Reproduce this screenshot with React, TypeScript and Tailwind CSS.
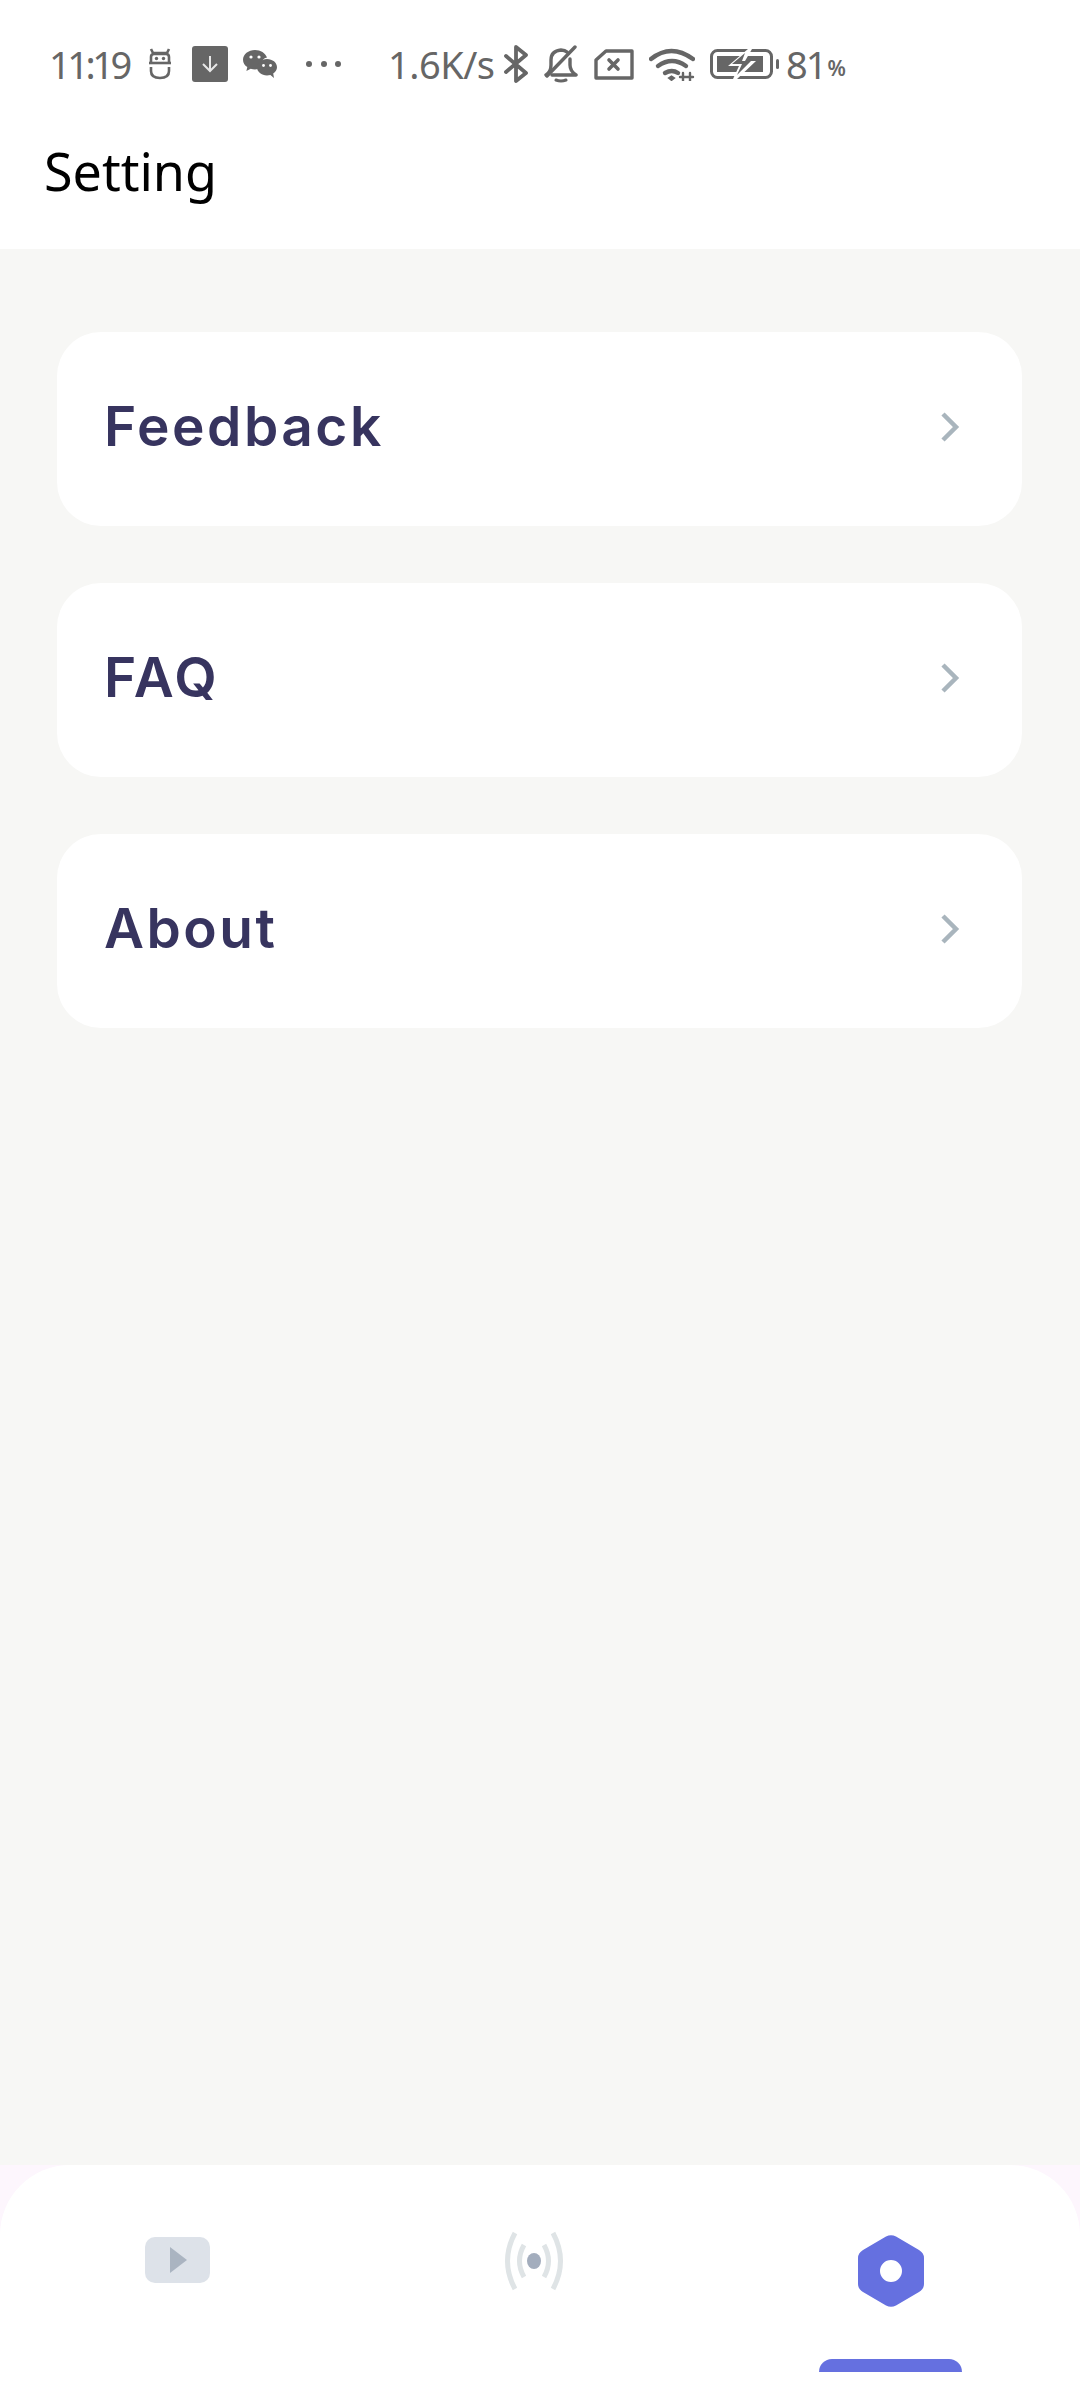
function RobotIcon() {
  return (
    <svg width="24" height="32" viewBox="0 0 24 32" fill="none" stroke="#666" strokeWidth="2.6" className="ml-[17px]">
      <path d="M3 1l2 4h14l2-4" />
      <path d="M3 14V9q0-3 3-3h12q3 0 3 3v5" />
      <path d="M1 15h22" />
      <path d="M3 19v4q0 7 9 7t9-7v-4" />
      <circle cx="8.500" cy="10.500" r="1.700" fill="#666" stroke="none" />
      <circle cx="15.500" cy="10.500" r="1.700" fill="#666" stroke="none" />
    </svg>
  )
}

function DownloadIcon() {
  return (
    <div className="ml-[20px] flex h-[36px] w-[36px] items-center justify-center rounded-[3px] bg-[#666]">
      <svg width="18" height="20" viewBox="0 0 18 20" fill="none" stroke="#e8e8e8" strokeWidth="2">
        <path d="M9 2v15M2 10l7 7 7-7" />
      </svg>
    </div>
  )
}

function WechatIcon() {
  return (
    <svg width="34" height="29" viewBox="0 0 34 29" className="ml-[15px]">
      <path d="M12 0C5.400 0 0 4.300 0 9.700c0 3 1.700 5.600 4.300 7.400L3.400 21l4.300-2.300c1.400.4 2.800.7 4.300.7 1 0 1.900-.1 2.800-.3C18 10 22 7.500 24 7.500 22.400 3 17.600 0 12 0z" fill="#666" />
      <circle cx="8" cy="7" r="1.600" fill="#fff" />
      <circle cx="16" cy="7" r="1.600" fill="#fff" />
      <path d="M24 9c-5.500 0-10 3.600-10 8.200s4.500 8.200 10 8.200c1.200 0 2.300-.2 3.400-.5L31 28l-.8-4.600c2.300-1.500 3.800-3.700 3.800-6.200C34 12.600 29.500 9 24 9z" fill="#666" />
      <circle cx="20.500" cy="15.500" r="1.400" fill="#fff" />
      <circle cx="27.500" cy="15.500" r="1.400" fill="#fff" />
    </svg>
  )
}

function BluetoothIcon() {
  return (
    <svg width="25" height="38" viewBox="0 0 25 38" fill="none" stroke="#666" strokeWidth="3.800" strokeLinecap="round" strokeLinejoin="round" className="ml-[10px]">
      <path d="M2 11l20 17-10 8V2l10 8L2 27" />
    </svg>
  )
}

function BellOffIcon() {
  return (
    <svg width="34" height="38" viewBox="0 0 34 38" fill="none" stroke="#666" strokeWidth="3.400" strokeLinecap="round" strokeLinejoin="round" className="ml-[15px]">
      <path d="M2 30q5-3 5-10v-5q0-9 10-10 4 0 6 2" />
      <path d="M26 14v6q0 6 6 10H8" />
      <path d="M31 2L3 31" />
      <path d="M12 35q5 2 10 0" strokeWidth="3" />
    </svg>
  )
}

function SimIcon() {
  return (
    <svg width="40" height="31" viewBox="0 0 40 31" fill="none" stroke="#666" strokeWidth="3.400" strokeLinejoin="round" className="ml-[16px]">
      <path d="M12 2h26v27H2V11z" />
      <path d="M15 11l9 9M24 11l-9 9" strokeLinecap="round" strokeWidth="3.600" />
    </svg>
  )
}

function WifiIcon() {
  return (
    <svg width="46" height="33" viewBox="0 0 46 33" fill="none" stroke="#666" strokeWidth="4.400" strokeLinecap="round" className="ml-[15px]">
      <path d="M2 11q20-16 42 0" />
      <path d="M9 18q14-10 28 0" />
      <path d="M16 25q7-4 13 0" />
      <path d="M20 30l2.500 2 2.500-2-2.500-1.500z" fill="#666" strokeWidth="2" />
      <path d="M34 25v8M41 25v8M31 29h6M38 29h6" strokeWidth="2.400" />
    </svg>
  )
}

function BatteryIcon() {
  return (
    <svg width="69" height="30" viewBox="0 0 69 30" fill="none" className="ml-[15px]">
      <rect x="1.500" y="1.500" width="60" height="27" rx="6" stroke="#666" strokeWidth="3" />
      <rect x="7" y="7" width="46" height="16" fill="#666" />
      <rect x="66" y="10" width="3" height="10" rx="1.500" fill="#666" />
      <path d="M38 0L18 17h11l-6 13 4 0 19-18H35l7-12z" fill="#fff" />
      <path d="M35 4L22 15h10l-5 11 14-14H32z" fill="#666" />
    </svg>
  )
}

function StatusBar() {
  return (
    <div className="flex h-[128px] items-center pl-[49px] font-['Noto_Sans',sans-serif] text-[38px] leading-none text-[#666]">
      <span className="w-[82px] whitespace-nowrap tracking-[-3.500px]">11:19</span>
      <RobotIcon />
      <DownloadIcon />
      <WechatIcon />
      <div className="ml-[29px] flex w-[35px] justify-between">
        <span className="h-[6px] w-[6px] rounded-full bg-[#666]" />
        <span className="h-[6px] w-[6px] rounded-full bg-[#666]" />
        <span className="h-[6px] w-[6px] rounded-full bg-[#666]" />
      </div>
      <span className="ml-[47px] w-[106px] whitespace-nowrap tracking-[-0.500px]">1.6K/s</span>
      <BluetoothIcon />
      <BellOffIcon />
      <SimIcon />
      <WifiIcon />
      <BatteryIcon />
      <span className="ml-[7px] tracking-[-2px]">81</span>
      <span className="mt-[8px] ml-[2px] text-[21px] font-semibold tracking-[-1.500px]">%</span>
    </div>
  )
}

function MenuRow({ label }: { label: string }) {
  return (
    <div className="flex h-[194px] items-center justify-between rounded-[44px] bg-white pl-[47px] pr-[62px]">
      <span className="mb-[5px] font-['Inter',sans-serif] text-[55px] font-semibold tracking-[2.500px] text-[#37345f]">{label}</span>
      <svg width="20" height="32" viewBox="0 0 20 32" fill="none" stroke="#a9b5bd" strokeWidth="4.500" className="mb-[5px]">
        <path d="M3 3l13 13L3 29" />
      </svg>
    </div>
  )
}

function BottomNav() {
  return (
    <div className="bg-[#fdf6fd]">
      <div className="flex h-[235px] items-start rounded-t-[70px] bg-white pl-[145px]">
        <div className="mt-[72px] flex h-[46px] w-[65px] items-center justify-center rounded-[10px] bg-[#dde2e9]">
          <svg width="17" height="26" viewBox="0 0 17 26" className="ml-[1px]">
            <path d="M0 0l17 13L0 26z" fill="#aab4c1" />
          </svg>
        </div>
        <svg width="62" height="60" viewBox="0 0 62 60" fill="none" stroke="#dfe4e6" strokeWidth="5" className="mt-[66px] ml-[293px]">
          <path d="M12 2Q-3 30 12 58M50 2q15 28 0 56" />
          <path d="M21 14q-9 16 0 32M41 14q9 16 0 32" />
          <ellipse cx="31" cy="30" rx="7" ry="8" fill="#a3adbd" stroke="none" />
        </svg>
        <div className="ml-[254px] flex w-[143px] flex-col items-center">
          <svg width="66" height="72" viewBox="0 0 66 72" className="mt-[70px]">
            <path fillRule="evenodd" d="M28 1.500q5-2.500 10 0l23 13.500q5 3 5 8v26q0 5-5 8L38 70.500q-5 2.500-10 0L5 57q-5-3-5-8V23q0-5 5-8zM33 25a11 11 0 1 0 0 22 11 11 0 1 0 0-22z" fill="#6570e0" />
          </svg>
          <div className="mt-[52px] h-[13px] w-[143px] rounded-t-[13px] bg-[#6570e0]" />
        </div>
      </div>
    </div>
  )
}

export default function App() {
  return (
    <div className="flex h-[2400px] w-[1080px] flex-col bg-[#f7f7f5]">
      <header className="bg-white">
        <StatusBar />
        <div className="h-[121px] pt-[10px] pl-[44px] font-['Noto_Sans',sans-serif] text-[52px] leading-[66px] text-black">Setting</div>
      </header>

      {/* menu cards */}
      <main className="flex flex-1 flex-col gap-[57px] pt-[83px] pl-[57px] pr-[58px]">
        <MenuRow label="Feedback" />
        <MenuRow label="FAQ" />
        <MenuRow label="About" />
      </main>

      <BottomNav />
    </div>
  )
}
